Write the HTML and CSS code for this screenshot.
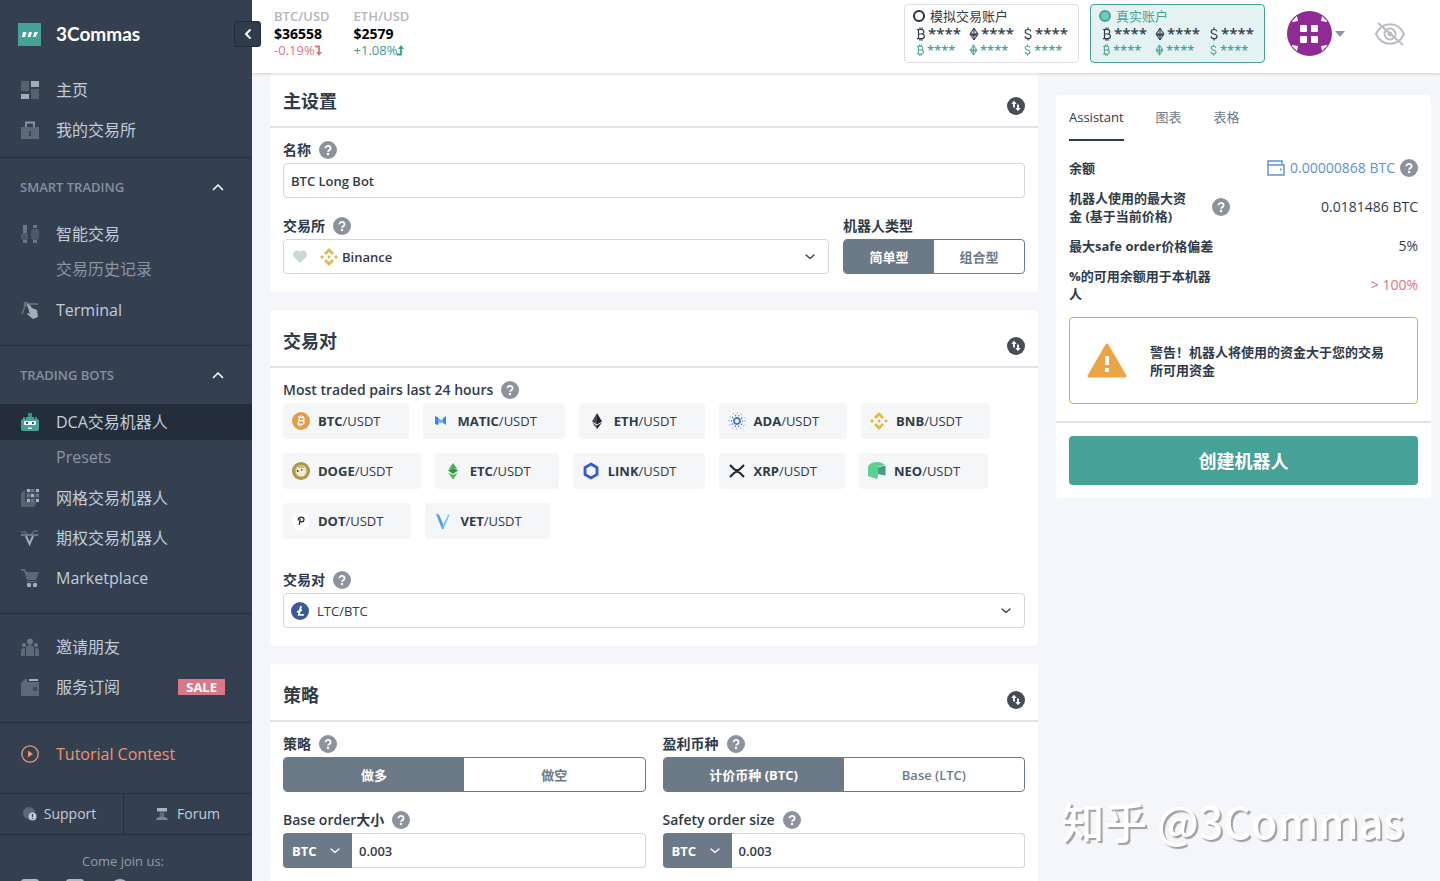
FILE: index.html
```html
<!DOCTYPE html>
<html lang="zh-CN">
<head>
  <meta charset="utf-8">
  <meta name="viewport" content="width=device-width, initial-scale=1">
  <title>3Commas</title>
  <link rel="stylesheet" href="styles.css">
</head>
<body>

  <!-- shared icons -->
  <svg class="sprite" aria-hidden="true">
    <symbol id="i-help" viewBox="0 0 18 18">
      <circle cx="9" cy="9" r="9" fill="#8d939e"/>
      <path d="M6.400 7.200a2.600 2.300 0 1 1 4 1.900c-.9.6-1.300.8-1.300 1.700" fill="none" stroke="#fff" stroke-width="1.800"/>
      <circle cx="9" cy="13" r="1.200" fill="#fff"/>
    </symbol>
    <symbol id="i-swap" viewBox="0 0 18 18">
      <circle cx="9" cy="9" r="9" fill="#454c55"/>
      <path d="M7 10.500V5M11 7.500V13" stroke="#fff" stroke-width="1.800" fill="none"/>
      <path d="M4.300 7 7 3.800 9.700 7zM8.300 11 11 14.200 13.700 11z" fill="#fff"/>
    </symbol>
    <symbol id="i-down" viewBox="0 0 10 6">
      <path d="M1 1l4 3.500L9 1" fill="none" stroke="currentColor" stroke-width="1.300" stroke-linecap="round"/>
    </symbol>
    <symbol id="i-up" viewBox="0 0 12 8">
      <path d="M1 7l5-5 5 5" fill="none" stroke="currentColor" stroke-width="1.500"/>
    </symbol>
    <symbol id="i-btc" viewBox="0 0 10 14">
      <path d="M1 2.500h4.500a2 2 0 0 1 0 4.500H2.500h3.500a2.300 2.300 0 0 1 0 4.700H1M2.500 2.500v9.200M4 .5v2M6 .5v2M4 11.700v2M6 11.700v2" fill="none" stroke="currentColor" stroke-width="1.200"/>
    </symbol>
    <symbol id="i-eth" viewBox="0 0 10 14">
      <path d="M5 1 9 7.200 5 13 1 7.200zM5 1v12M1 7.200h8M2 5.500l3 3.500 3-3.500M2 9l3-2 3 2" fill="currentColor" fill-opacity=".25" stroke="currentColor"/>
    </symbol>
    <symbol id="i-usd" viewBox="0 0 10 14">
      <path d="M7.800 4.300C7.500 3 6.500 2.500 5 2.500c-1.700 0-2.800.8-2.800 2.200 0 3 5.800 1.500 5.800 4.700 0 1.400-1.200 2.200-3 2.200-1.700 0-2.800-.8-3-2.200M5 .5v2M5 11.600v2" fill="none" stroke="currentColor" stroke-width="1.200"/>
    </symbol>
    <symbol id="i-bnb" viewBox="0 0 18 18">
      <g fill="#e6b84a">
        <path d="M9 0l5 5-2 2-3-3-3 3-2-2zM9 18l-5-5 2-2 3 3 3-3 2 2zM9 7.200 10.800 9 9 10.800 7.200 9zM2 7l2 2-2 2-2-2zM16 7l2 2-2 2-2-2z"/>
      </g>
    </symbol>
  </svg>

  <div class="app">
    <aside class="sidebar">
      <a class="brand" href="#">
        <svg width="23" height="23" viewBox="0 0 23 23"><path fill="#46a297" d="M0 0h23v23H0z"/><path fill="#fff" d="M5 9h3.500l-1.500 5H4zM11 9h3l-1.500 5H9.500zM16.500 9H20l-2.500 5H15z"/></svg>
        <span>3Commas</span>
      </a>
      <button class="collapse" aria-label="Collapse menu">
        <svg width="8" height="12" viewBox="0 0 8 12"><path d="M6.500 1.500 2 6l4.500 4.500" fill="none" stroke="#fff" stroke-width="2"/></svg>
      </button>

      <nav>
        <div class="group">
          <a class="item" href="#">
            <svg class="nav-icon" viewBox="0 0 18 18"><path fill="#55616f" d="M0 0h8v10H0zM10 8h8v10h-8z"/><path fill="#a3acb8" d="M10 0h8v6h-8zM0 13h8v5H0z"/></svg>
            主页
          </a>
          <a class="item" href="#">
            <svg class="nav-icon" viewBox="0 0 18 18"><path fill="#5d6977" d="M0 6h18v12H0z"/><path d="M5 6V1.500h8V6" fill="none" stroke="#8d97a4" stroke-width="1.800"/><path fill="#3a4655" d="M8 10h2v5H8z"/></svg>
            我的交易所
          </a>
        </div>

        <div class="group">
          <button class="group-head">SMART TRADING <svg width="12" height="8"><use href="#i-up"/></svg></button>
          <a class="item" href="#">
            <svg class="nav-icon" viewBox="0 0 18 18"><path fill="#6b7684" d="M2 0h4v8H2zM12 0h4v3h-4zM2 15h4v3H2zM12 15h4v3h-4z"/><rect x="0" y="8" width="7" height="7" rx="2" fill="#4d5967"/><rect x="10" y="4" width="8" height="11" rx="3" fill="#4d5967"/></svg>
            智能交易
          </a>
          <a class="item sub" href="#">交易历史记录</a>
          <a class="item" href="#">
            <svg class="nav-icon" viewBox="0 0 18 18"><path d="M1 13 5 3h12" fill="none" stroke="#5d6977" stroke-width="2"/><circle cx="5" cy="3" r="2.500" fill="#66717f"/><path fill="#a3acb8" d="M6 4l2-1 3 4 5 2 1 7-5 2-6-5 1-1 2 1z"/></svg>
            Terminal
          </a>
        </div>

        <div class="group">
          <button class="group-head">TRADING BOTS <svg width="12" height="8"><use href="#i-up"/></svg></button>
          <a class="item active" href="#">
            <svg class="nav-icon" viewBox="0 0 18 18"><path fill="#3d8f85" d="M7 0h4v4H7zM2 4h2v3H2zM14 4h2v3h-2z"/><rect y="6" width="18" height="12" rx="2" fill="#46a297"/><path fill="#46a297" d="M5 4h8v3H5z"/><rect x="3" y="8" width="12" height="4" rx="1" fill="#fff"/><path fill="#35584f" d="M5 9h2v2H5zM11 9h2v2h-2z"/><path fill="#fff" d="M7 14.500h4v1.500H7z"/></svg>
            DCA交易机器人
          </a>
          <a class="item sub" href="#">Presets</a>
          <a class="item" href="#">
            <svg class="nav-icon" viewBox="0 0 18 18"><path fill="#566270" d="M0 4l4-3v12h12l-3 5H0z"/><path fill="#465261" d="M5 0h13v13H5z"/><path fill="#a9b2bd" d="M6 0h3v3H6zM15 0h3v3h-3zM10 5h3v3h-3zM6 10h3v3H6zM15 10h3v3h-3z"/><path fill="#6b7684" d="M10 0h3v3h-3zM6 5h3v3H6zM15 5h3v3h-3zM10 10h3v3h-3z"/></svg>
            网格交易机器人
          </a>
          <a class="item" href="#">
            <svg class="nav-icon" viewBox="0 0 18 18"><path d="M0 3h4l3 3M17 2h-4l-3 4" fill="none" stroke="#5d6977" stroke-width="1.500"/><path d="M0 6h17" stroke="#7b8693" stroke-width="1.500"/><path d="M5 7l3.500 8L12 7" fill="none" stroke="#a3acb8" stroke-width="2"/></svg>
            期权交易机器人
          </a>
          <a class="item" href="#">
            <svg class="nav-icon" viewBox="0 0 18 18"><path fill="#5d6977" d="M0 0h4l1.500 3H18l-3 8H6L3 2H0z"/><path d="M6 12.500h10" stroke="#5d6977"/><rect x="6" y="14" width="4" height="4" rx="1" fill="#a3acb8"/><rect x="12" y="14" width="4" height="4" rx="1" fill="#a3acb8"/></svg>
            Marketplace
          </a>
        </div>

        <div class="group group-plain">
          <a class="item" href="#">
            <svg class="nav-icon" viewBox="0 0 18 18"><g fill="#6b7684"><circle cx="9" cy="3.500" r="3"/><circle cx="3" cy="7" r="2"/><circle cx="15" cy="7" r="2"/></g><path fill="#5d6977" d="M5 18V10a4 3 0 0 1 8 0v8zM0 18v-6a3 2 0 0 1 4-1.500V18zM18 18v-6a3 2 0 0 0-4-1.500V18z"/></svg>
            邀请朋友
          </a>
          <a class="item" href="#">
            <svg class="nav-icon" viewBox="0 0 18 18"><path fill="#5d6977" d="M0 5l4-4h2v3h12v14H0z"/><path fill="#a3acb8" d="M8 1h9v2H8z"/><rect x="12" y="9" width="4" height="4" fill="#414d5c"/></svg>
            服务订阅
            <span class="sale">SALE</span>
          </a>
        </div>

        <div class="group group-promo">
          <a class="item promo" href="#">
            <svg class="nav-icon" viewBox="0 0 18 18"><circle cx="9" cy="9" r="8.200" fill="none" stroke="#ec946f" stroke-width="1.300"/><path d="M7 5.500 12 9l-5 3.500z" fill="#ec946f"/></svg>
            Tutorial Contest
          </a>
        </div>
      </nav>

      <div class="links">
        <a href="#">
          <svg width="14" height="14" viewBox="0 0 14 14"><circle cx="6" cy="6" r="6" fill="#5d6977"/><circle cx="9.500" cy="9.500" r="4" fill="#c0c8d2"/><path d="M9.500 7v3M9.500 11v1" stroke="#344050" stroke-width="1.200"/></svg>
          Support
        </a>
        <a href="#">
          <svg width="12" height="14" viewBox="0 0 12 14"><path fill="#a9b2bd" d="M1 1h10v4l-1.500-1L8 5 6 4 4 5 2.500 4 1 5z"/><circle cx="6" cy="7.500" r="2.500" fill="#5d6977"/><path fill="#7b8693" d="M0 13a6 3.500 0 0 1 12 0z"/></svg>
          Forum
        </a>
      </div>

      <div class="join">
        <p>Come join us:</p>
        <div class="social">
          <a href="#" aria-label="Facebook"><svg width="18" height="18"><rect width="18" height="18" rx="3" fill="#aeb7c2"/></svg></a>
          <a href="#" aria-label="YouTube"><svg width="18" height="18"><rect width="18" height="18" rx="3" fill="#aeb7c2"/></svg></a>
          <a href="#" aria-label="Telegram"><svg width="18" height="18"><circle cx="9" cy="9" r="9" fill="#aeb7c2"/></svg></a>
        </div>
      </div>
    </aside>

    <div class="page">
      <header class="topbar">
        <div class="ticker">
          <span class="pair">BTC/USD</span>
          <b>$36558</b>
          <span class="down">-0.19%<svg width="7" height="11" viewBox="0 0 7 11"><path d="M0 1.500h4V8" fill="none" stroke="currentColor" stroke-width="1.800"/><path d="M1 7h6l-3 4z" fill="currentColor"/></svg></span>
        </div>
        <div class="ticker">
          <span class="pair">ETH/USD</span>
          <b>$2579</b>
          <span class="up">+1.08%<svg width="7" height="11" viewBox="0 0 7 11"><path d="M0 9.500h4V3" fill="none" stroke="currentColor" stroke-width="1.800"/><path d="M1 4h6L4 0z" fill="currentColor"/></svg></span>
        </div>

        <div class="accounts">
          <label class="account">
            <span class="account-name"><input type="radio" name="account">模拟交易账户</span>
            <span class="sums">
              <span><svg><use href="#i-btc"/></svg>****</span>
              <span><svg><use href="#i-eth"/></svg>****</span>
              <span><svg><use href="#i-usd"/></svg>****</span>
            </span>
            <span class="sums small">
              <span><svg><use href="#i-btc"/></svg>****</span>
              <span><svg><use href="#i-eth"/></svg>****</span>
              <span><svg><use href="#i-usd"/></svg>****</span>
            </span>
          </label>
          <label class="account selected">
            <span class="account-name"><input type="radio" name="account" checked>真实账户</span>
            <span class="sums">
              <span><svg><use href="#i-btc"/></svg>****</span>
              <span><svg><use href="#i-eth"/></svg>****</span>
              <span><svg><use href="#i-usd"/></svg>****</span>
            </span>
            <span class="sums small">
              <span><svg><use href="#i-btc"/></svg>****</span>
              <span><svg><use href="#i-eth"/></svg>****</span>
              <span><svg><use href="#i-usd"/></svg>****</span>
            </span>
          </label>
        </div>

        <button class="user" aria-label="Account menu">
          <svg width="45" height="45" viewBox="0 0 45 45">
            <circle cx="22.500" cy="22.500" r="22.500" fill="#902a94"/>
            <g fill="#fff">
              <rect x="13" y="14" width="7" height="7" rx="1"/><rect x="24" y="14" width="7" height="7" rx="1"/>
              <rect x="13" y="25" width="7" height="7" rx="1"/><rect x="24" y="25" width="7" height="7" rx="1"/>
              <path d="M5 11l6-1-1-5-5 5zM40 11l-6-1 1-5 5 5zM5 34l6 1-1 5-5-5zM40 34l-6 1 1 5 5-5z"/>
            </g>
          </svg>
          <svg width="10" height="6" viewBox="0 0 10 6"><path d="M0 0h10L5 6z" fill="#8a95a0"/></svg>
        </button>
        <button class="hide" aria-label="Hide balances">
          <svg width="32" height="24" viewBox="0 0 32 24" fill="none" stroke="#b9bdc3" stroke-width="2"><path d="M2 12C8-1 24-1 30 12 24 25 8 25 2 12z"/><circle cx="16" cy="12" r="5.500"/><circle cx="16" cy="12" r="1.500"/><path d="M4 1l25 22"/></svg>
        </button>
      </header>

      <main class="content">
        <form class="settings">
          <section class="card">
            <div class="card-head">
              <h2>主设置</h2>
              <svg class="round"><use href="#i-swap"/></svg>
            </div>
            <div class="card-body">
              <div class="field">
                <div class="label"><label for="name">名称</label><svg class="round"><use href="#i-help"/></svg></div>
                <input class="box" id="name" type="text" value="BTC Long Bot">
              </div>
              <div class="row row-wide">
                <div class="field">
                  <div class="label"><label for="exchange">交易所</label><svg class="round"><use href="#i-help"/></svg></div>
                  <div class="box picker">
                    <svg class="heart" width="14" height="13" viewBox="0 0 14 13"><path d="M7 13 1 7C-2 3 3-2 7 2c4-4 9 1 6 5z" fill="#cbd6d8"/></svg>
                    <svg class="round"><use href="#i-bnb"/></svg>
                    <select id="exchange"><option>Binance</option></select>
                    <svg class="arrow"><use href="#i-down"/></svg>
                  </div>
                </div>
                <div class="field">
                  <div class="label">机器人类型</div>
                  <div class="switch">
                    <button type="button" class="on">简单型</button>
                    <button type="button">组合型</button>
                  </div>
                </div>
              </div>
            </div>
          </section>

          <section class="card">
            <div class="card-head">
              <h2>交易对</h2>
              <svg class="round"><use href="#i-swap"/></svg>
            </div>
            <div class="card-body">
              <div class="field">
                <div class="label">Most traded pairs last 24 hours<svg class="round"><use href="#i-help"/></svg></div>
                <div class="chips">
                  <button type="button"><svg viewBox="0 0 18 18"><circle cx="9" cy="9" r="9" fill="#e79a45"/><path d="M6 4.800l4.500.7c2.500.4 2 3.200-.2 3.200 2.600.3 2.300 4-.7 3.700l-4.400-.6M7.500 5l-1.200 7M6.800 8.300l3.500.4M9 3.500l-.4 2M11 3.800l-.4 2M7.200 12l-.4 2M9.200 12.300l-.4 2" fill="none" stroke="#fff" stroke-width="1.300"/></svg><span><b>BTC</b>/USDT</span></button>
                  <button type="button"><svg viewBox="0 0 18 18"><path fill="#3f7fe8" d="M3 4l4 2v4l-1 3-3-1z"/><path fill="#6aaef6" d="M6 6l3 2 3-2v4l-3 1-3-1z"/><path fill="#3a8bf0" d="M11 6l3-2v9l-3-2z"/></svg><span><b>MATIC</b>/USDT</span></button>
                  <button type="button"><svg viewBox="0 0 18 18"><path fill="#4a4a4e" d="M9 1v11.500L4 9.500z"/><path fill="#252528" d="M9 1v11.500l5-3z"/><path fill="#5b5b60" d="M9 17v-3.500L4 10.500z"/><path fill="#17171a" d="M9 17v-3.500l5-3z"/></svg><span><b>ETH</b>/USDT</span></button>
                  <button type="button"><svg viewBox="0 0 18 18" fill="none" stroke="#3f74d0" stroke-linecap="round"><circle cx="9" cy="9" r="3" stroke-width="2" stroke-dasharray="1.600 1.500"/><circle cx="9" cy="9" r="5.500" stroke-width="1.400" stroke-dasharray=".1 3.300"/><circle cx="9" cy="9" r="8" stroke-width="1" stroke-dasharray=".1 4.100"/></svg><span><b>ADA</b>/USDT</span></button>
                  <button type="button"><svg><use href="#i-bnb"/></svg><span><b>BNB</b>/USDT</span></button>
                  <button type="button"><svg viewBox="0 0 18 18"><circle cx="9" cy="9" r="9" fill="#a8954a"/><circle cx="9" cy="9" r="6.500" fill="#c9b877"/><path fill="#f3ecd8" d="M5 5l2 1h4l2-1 1 5-2 4H7L4 11z"/><path fill="#5a4a28" d="M5 8h1.500v2H5zM9 7h1.500v1.500H9z"/></svg><span><b>DOGE</b>/USDT</span></button>
                  <button type="button"><svg viewBox="0 0 18 18"><path fill="#45b055" d="M9 1l4.500 6.500L9 6zM9 1 4.500 7.500 9 6z"/><path fill="#2f9442" d="M9 6l5 2.500L9 12 4 8.500z"/><path fill="#4cba5c" d="M4 10.500 9 13l5-2.500L9 17.500z"/></svg><span><b>ETC</b>/USDT</span></button>
                  <button type="button"><svg viewBox="0 0 18 18"><path d="M9 2l6 3.500v7L9 16l-6-3.500v-7z" fill="none" stroke="#3558d6" stroke-width="2.800"/></svg><span><b>LINK</b>/USDT</span></button>
                  <button type="button"><svg viewBox="0 0 18 18"><path d="M2 3l4 4q3 2.500 6 0l4-4M2 15l4-4q3-2.500 6 0l4 4" fill="none" stroke="#1d2226" stroke-width="2"/></svg><span><b>XRP</b>/USDT</span></button>
                  <button type="button"><svg viewBox="0 0 18 18"><path fill="#5fd08f" d="M0 4q3-4 9-4 5 0 8 3l-7 2v9l-1 3-9-3z"/><path fill="#429e80" d="M10 5.500l7.500-2v10L10 12z"/></svg><span><b>NEO</b>/USDT</span></button>
                  <button type="button"><svg viewBox="0 0 18 18"><circle cx="9" cy="9" r="9" fill="#fff"/><path d="M6.300 8.500C5.500 4.500 12 4 12 7.500c0 3-4 2.800-4 1.200M8.200 6.500 7.200 13" fill="none" stroke="#25282c" stroke-width="1.300"/></svg><span><b>DOT</b>/USDT</span></button>
                  <button type="button"><svg viewBox="0 0 18 18"><path fill="#5b9be6" d="M2 2l3 .5L9.500 13v4H8z"/><path fill="#6ccbf3" d="M16 2l-2 1L8.500 14l1 3z"/></svg><span><b>VET</b>/USDT</span></button>
                </div>
              </div>
              <div class="field field-pair">
                <div class="label"><label for="pair">交易对</label><svg class="round"><use href="#i-help"/></svg></div>
                <div class="box picker">
                  <svg class="round" viewBox="0 0 18 18"><circle cx="9" cy="9" r="9" fill="#3c5a96"/><path d="M10 4 7.800 12.800h5M6 10l5-2" fill="none" stroke="#fff" stroke-width="1.800"/></svg>
                  <select id="pair"><option>LTC/BTC</option></select>
                  <svg class="arrow"><use href="#i-down"/></svg>
                </div>
              </div>
            </div>
          </section>

          <section class="card">
            <div class="card-head">
              <h2>策略</h2>
              <svg class="round"><use href="#i-swap"/></svg>
            </div>
            <div class="card-body">
              <div class="row">
                <div class="field">
                  <div class="label">策略<svg class="round"><use href="#i-help"/></svg></div>
                  <div class="switch">
                    <button type="button" class="on">做多</button>
                    <button type="button">做空</button>
                  </div>
                </div>
                <div class="field">
                  <div class="label">盈利币种<svg class="round"><use href="#i-help"/></svg></div>
                  <div class="switch">
                    <button type="button" class="on">计价币种 (BTC)</button>
                    <button type="button">Base (LTC)</button>
                  </div>
                </div>
              </div>
              <div class="row">
                <div class="field">
                  <div class="label"><label for="base">Base order大小</label><svg class="round"><use href="#i-help"/></svg></div>
                  <div class="amount">
                    <div class="unit">
                      <select aria-label="Base order currency"><option>BTC</option></select>
                      <svg class="arrow"><use href="#i-down"/></svg>
                    </div>
                    <input class="box" id="base" type="text" value="0.003">
                  </div>
                </div>
                <div class="field">
                  <div class="label"><label for="safety">Safety order size</label><svg class="round"><use href="#i-help"/></svg></div>
                  <div class="amount">
                    <div class="unit">
                      <select aria-label="Safety order currency"><option>BTC</option></select>
                      <svg class="arrow"><use href="#i-down"/></svg>
                    </div>
                    <input class="box" id="safety" type="text" value="0.003">
                  </div>
                </div>
              </div>
            </div>
          </section>
        </form>

        <aside class="summary">
          <div class="tabs">
            <button class="current">Assistant</button>
            <button>图表</button>
            <button>表格</button>
          </div>
          <dl>
            <div>
              <dt>余额</dt>
              <dd class="balance">
                <svg width="18" height="16" viewBox="0 0 18 16" fill="none" stroke="#5c93d6" stroke-width="1.500"><path d="M15 4V1H1v14h16V5H1"/><path d="M13 9.500h1.500" stroke-width="2"/></svg>
                <a href="#">0.00000868 BTC</a>
                <svg class="round"><use href="#i-help"/></svg>
              </dd>
            </div>
            <div>
              <dt class="with-help"><span>机器人使用的最大资金 (基于当前价格)</span><svg class="round"><use href="#i-help"/></svg></dt>
              <dd>0.0181486 BTC</dd>
            </div>
            <div>
              <dt>最大safe order价格偏差</dt>
              <dd>5%</dd>
            </div>
            <div>
              <dt>%的可用余额用于本机器人</dt>
              <dd class="over">&gt; 100%</dd>
            </div>
          </dl>
          <div class="warning">
            <svg width="40" height="35" viewBox="0 0 40 35"><path d="M20 2 38 33H2z" fill="#eda445" stroke="#eda445" stroke-width="3" stroke-linejoin="round"/><path d="M18 13h4v9h-4zM18 25h4v4h-4z" fill="#fff"/></svg>
            <p>警告！机器人将使用的资金大于您的交易所可用资金</p>
          </div>
          <div class="submit">
            <button>创建机器人</button>
          </div>
        </aside>
      </main>
    </div>
  </div>

  <div class="watermark">知乎 @3Commas</div>

</body>
</html>
```

FILE: styles.css
```css
* {
  box-sizing: border-box;
}

body {
  margin: 0;
  background: #f5f6f9;
  color: #303b49;
  font-family: "Open Sans", "Noto Sans CJK SC", sans-serif;
  font-size: 13px;
  line-height: 18px;
}

button, input, select {
  font: inherit;
  color: inherit;
  margin: 0;
}

button {
  border: 0;
  padding: 0;
  background: none;
  cursor: pointer;
}

a {
  color: inherit;
  text-decoration: none;
}

svg {
  flex: none;
  display: block;
}

.sprite {
  position: absolute;
  width: 0;
  height: 0;
}

.round {
  width: 18px;
  height: 18px;
}

.arrow {
  width: 10px;
  height: 6px;
  pointer-events: none;
}

.app {
  display: flex;
  height: 100vh;
  overflow: hidden;
}

/* sidebar */
.sidebar {
  position: relative;
  z-index: 2;
  flex: none;
  width: 252px;
  background: #344050;
  color: #c3cdd9;
}

.brand {
  display: flex;
  align-items: center;
  gap: 15px;
  height: 68px;
  padding-left: 18px;
  color: #fff;
  font-family: Lato, sans-serif;
  font-size: 19px;
  font-weight: 700;
}

.collapse {
  position: absolute;
  top: 21px;
  right: -9px;
  width: 27px;
  height: 26px;
  border: 1px solid #232e3b;
  border-radius: 3px;
  background: #303c4b;
}

.collapse svg {
  margin: 0 auto;
}

.group {
  padding: 0 0 17px;
  border-bottom: 1px solid #263240;
}

.group:first-child {
  padding: 4px 0 9px;
}

.group-plain {
  padding-top: 15px;
}

.group-promo {
  padding: 13px 0 21px;
}

.group-head {
  display: flex;
  align-items: center;
  justify-content: space-between;
  width: 100%;
  height: 58px;
  padding: 0 28px 0 20px;
  color: #8490a0;
  font-weight: 600;
}

.group-head svg {
  color: #fff;
}

.item {
  display: flex;
  align-items: center;
  height: 36px;
  padding: 0 27px 0 21px;
  font-size: 16px;
}

.item + .item {
  margin-top: 4px;
}

.item + .sub {
  height: 34px;
  margin: 0 0 6px;
}

.sub {
  padding-left: 56px;
  color: #8995a3;
}

.sub + .item {
  margin-top: 0;
}

.active {
  background: #242e3a;
}

.promo {
  color: #ec946f;
}

.nav-icon {
  width: 18px;
  height: 18px;
  margin-right: 17px;
}

.sale {
  margin-left: auto;
  padding: 0 8px;
  background: #d9788a;
  color: #fff;
  font-size: 13px;
  font-weight: 700;
  line-height: 16px;
}

.links {
  display: grid;
  grid-template-columns: 123px 1fr;
  border-bottom: 1px solid #263240;
}

.links a {
  display: flex;
  align-items: center;
  justify-content: center;
  gap: 7px;
  height: 40px;
  padding-right: 4px;
  font-size: 14px;
}

.links a + a {
  gap: 9px;
  padding-right: 0;
  border-left: 1px solid #263240;
}

.join {
  padding: 17px 27px 0 21px;
  color: #919cab;
  text-align: center;
}

.join p {
  margin: 0 0 9px;
}

.social {
  display: flex;
  gap: 27px;
}

/* top bar */
.page {
  display: flex;
  flex: 1;
  flex-direction: column;
  min-width: 0;
}

.topbar {
  display: flex;
  flex: none;
  align-items: center;
  height: 73px;
  padding: 0 34px 6px 22px;
  background: #fff;
  box-shadow: 0 1px 3px rgba(40, 50, 65, 0.2);
  position: relative;
  z-index: 1;
}

.ticker {
  display: flex;
  flex-direction: column;
  margin-right: 24px;
  line-height: 17px;
}

.ticker b {
  color: #000;
  font-size: 14px;
  font-weight: 700;
}

.pair {
  color: #b4b7bb;
  font-weight: 600;
}

.up, .down {
  display: flex;
  align-items: center;
}

.up {
  color: #3b9c90;
}

.down {
  color: #dd7485;
}

.accounts {
  display: flex;
  gap: 11px;
  margin-left: auto;
}

.account {
  width: 175px;
  height: 59px;
  padding: 2px 8px;
  border: 1px solid #dcdfe3;
  border-radius: 4px;
}

.account.selected {
  border-color: #46a297;
  background: #e4f3f2;
}

.account-name {
  display: flex;
  align-items: center;
  gap: 5px;
}

.selected .account-name {
  color: #46a297;
}

.account input {
  width: 12px;
  height: 12px;
  border: 2px solid #26303b;
  border-radius: 50%;
  appearance: none;
}

.account input:checked {
  border-color: #46a297;
  background: #6fcbc0;
}

.sums {
  display: grid;
  grid-template-columns: 53px 54px 1fr;
  padding-left: 3px;
  font-size: 15px;
  font-weight: 600;
  line-height: 17px;
}

.sums span {
  display: flex;
  align-items: center;
  gap: 2px;
}

.sums svg {
  width: 10px;
  height: 14px;
}

.sums.small {
  color: #46a297;
  font-size: 13px;
  line-height: 16px;
}

.small svg {
  width: 9px;
  height: 12px;
}

.user {
  display: flex;
  align-items: center;
  gap: 3px;
  margin: 0 29px 0 22px;
}

/* content */
.content {
  display: grid;
  grid-template-columns: minmax(0, 1fr) 375px;
  gap: 18px;
  align-items: start;
  padding: 0 9px 0 18px;
}

.card {
  margin-bottom: 18px;
  border-radius: 4px;
  background: #fff;
}

.card-head {
  display: flex;
  align-items: flex-end;
  justify-content: space-between;
  height: 58px;
  padding: 0 13px 11px;
  border-bottom: 2px solid #e1e3e6;
}

.card:first-child .card-head {
  height: 55px;
}

.card-head h2 {
  margin: 0 0 2px;
  font-size: 18px;
  font-weight: 600;
  line-height: 24px;
}

.card-body {
  padding: 12px 13px 18px;
}

.row {
  display: grid;
  grid-template-columns: 1fr 1fr;
  gap: 17px;
}

.row-wide {
  grid-template-columns: 3fr 1fr;
  gap: 14px;
}

.field + .row,
.row + .row {
  margin-top: 18px;
}

.field-pair {
  margin-top: 31px;
}

.label {
  display: flex;
  align-items: center;
  gap: 8px;
  height: 20px;
  margin-bottom: 3px;
  font-size: 14px;
  font-weight: 600;
}

.box {
  width: 100%;
  height: 35px;
  padding: 0 7px;
  border: 1px solid #d3d6da;
  border-radius: 4px;
  background: #fff;
  font-weight: 600;
}

.picker {
  display: flex;
  align-items: center;
  padding-right: 13px;
}

.picker select {
  flex: 1;
  height: 33px;
  padding: 0 4px;
  border: 0;
  background: none;
  appearance: none;
}

.field-pair select {
  padding-left: 8px;
  font-weight: 500;
}

.heart {
  margin: 0 13px 0 2px;
}

.switch {
  display: flex;
  height: 35px;
  overflow: hidden;
  border: 1px solid #6c7a87;
  border-radius: 4px;
}

.switch button {
  flex: 1;
  color: #6c7a87;
  font-weight: 600;
}

.switch .on {
  background: #6c7a87;
  color: #fff;
  font-weight: 700;
}

.chips {
  display: flex;
  flex-wrap: wrap;
  gap: 14px;
}

.chips button {
  display: flex;
  align-items: center;
  gap: 8px;
  height: 36px;
  padding: 0 28px 0 9px;
  border-radius: 4px;
  background: #f5f6f8;
}

.chips svg {
  width: 18px;
  height: 18px;
}

.chips b {
  font-weight: 700;
}

.amount {
  display: flex;
}

.amount .box {
  border-left: 0;
  border-radius: 0 4px 4px 0;
}

.unit {
  display: flex;
  flex: none;
  align-items: center;
  width: 69px;
  padding-right: 12px;
  border-radius: 4px 0 0 4px;
  background: #6c7a87;
  color: #fff;
}

.unit select {
  flex: 1;
  width: 100%;
  height: 35px;
  padding: 0 0 0 9px;
  border: 0;
  background: none;
  font-weight: 700;
  appearance: none;
}

/* summary panel */
.summary {
  margin-top: 22px;
  border-radius: 4px;
  background: #fff;
}

.tabs {
  display: flex;
  gap: 32px;
  padding: 0 13px;
}

.tabs button {
  height: 46px;
  border-bottom: 2px solid transparent;
  color: #6c7a87;
}

.tabs .current {
  border-color: #303b49;
  color: #303b49;
}

.summary dl {
  display: grid;
  gap: 12px;
  margin: 18px 13px 14px;
}

.summary dl div {
  display: flex;
  align-items: center;
  justify-content: space-between;
}

.summary dt {
  max-width: 152px;
  font-weight: 700;
}

.summary dt.with-help {
  display: flex;
  align-items: center;
  gap: 18px;
  max-width: none;
}

.with-help span {
  width: 125px;
}

.summary dd {
  margin: 0;
  font-size: 14px;
  font-weight: 500;
}

.summary .balance {
  display: flex;
  align-items: center;
  gap: 5px;
  color: #5c93d6;
}

.summary .over {
  color: #dd7485;
}

.warning {
  display: flex;
  align-items: center;
  gap: 23px;
  height: 87px;
  margin: 0 13px 17px;
  padding: 0 27px 0 17px;
  border: 1px solid #eda445;
  border-radius: 4px;
}

.warning p {
  margin: 0;
  font-weight: 600;
}

.submit {
  padding: 13px;
  border-top: 2px solid #e1e3e6;
}

.submit button {
  width: 100%;
  height: 49px;
  border-radius: 4px;
  background: #46a297;
  color: #fff;
  font-size: 18px;
  font-weight: 600;
}

.watermark {
  position: fixed;
  right: 36px;
  bottom: 33px;
  color: #fff;
  font-family: "Noto Sans CJK SC", sans-serif;
  font-size: 43px;
  font-weight: 500;
  line-height: 56px;
  text-shadow: 2px 2px 1px #a0a0a0;
  pointer-events: none;
}
```
